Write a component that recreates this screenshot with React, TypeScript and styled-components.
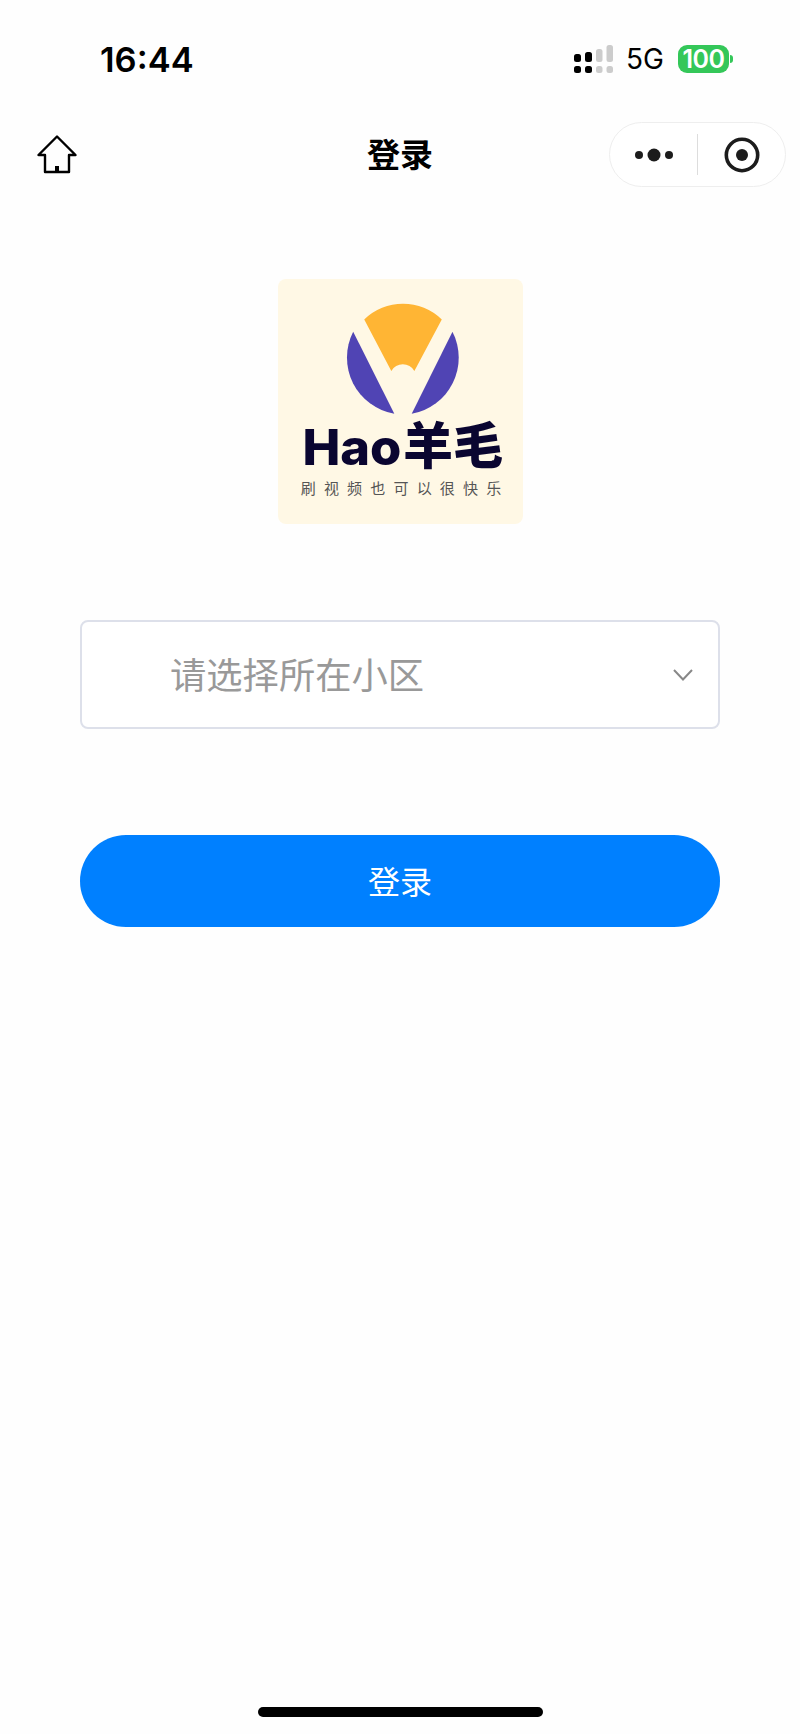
import React from "react";
import styled, { createGlobalStyle } from "styled-components";

const Global = createGlobalStyle`
  html, body { margin: 0; padding: 0; background: #fff; }
  * { box-sizing: border-box; }
`;

const cjk = `"Noto Sans CJK SC", "Noto Sans", sans-serif`;

const Page = styled.div`
  width: 800px;
  height: 1734px;
  display: flex;
  flex-direction: column;
  align-items: center;
  background: #fefefe;
  font-family: Inter, ${cjk};
  overflow: hidden;
`;

const StatusBar = styled.div`
  width: 100%;
  height: 118px;
  flex: none;
  display: flex;
  align-items: center;
  justify-content: space-between;
  padding: 0 67px 0 100px;
  color: #000;
`;

const Clock = styled.span`
  font-size: 34.5px;
  font-weight: 600;
  letter-spacing: 0;
`;

const StatusRight = styled.div`
  display: flex;
  align-items: center;
`;

const Network = styled.span`
  font-size: 28px;
  font-weight: 400;
  margin: 0 14px 0 13px;
  line-height: 1;
`;

const Battery = styled.div`
  display: flex;
  align-items: center;
`;

const BatteryBody = styled.span`
  width: 51px;
  height: 28px;
  border-radius: 9px;
  background: #34c759;
  color: #fff;
  font-size: 25px;
  font-weight: 600;
  display: flex;
  align-items: center;
  justify-content: center;
  letter-spacing: -0.5px;
`;

const BatteryTip = styled.span`
  width: 3px;
  height: 8px;
  margin-left: 1px;
  border-radius: 0 3px 3px 0;
  background: #34c759;
`;

const NavBar = styled.div`
  width: 100%;
  height: 73px;
  flex: none;
  display: grid;
  grid-template-columns: 1fr auto 1fr;
  align-items: center;
`;

const HomeButton = styled.div`
  padding-left: 37px;
  display: flex;
`;

const Title = styled.div`
  font-family: ${cjk};
  font-size: 33px;
  font-weight: 700;
  color: #000;
  line-height: 1;
  padding-bottom: 3px;
`;

const Capsule = styled.div`
  justify-self: end;
  width: 177px;
  height: 65px;
  margin-right: 14px;
  border: 1px solid #eeeeee;
  border-radius: 33px;
  display: flex;
  align-items: center;
  background: #fff;
`;

const CapsuleCell = styled.div`
  flex: 1;
  display: flex;
  align-items: center;
  justify-content: center;
`;

const CapsuleDivider = styled.span`
  width: 1px;
  height: 41px;
  background: #dddddd;
`;

const Logo = styled.svg`
  width: 245px;
  height: 245px;
  flex: none;
  margin-top: 88px;
  display: block;
`;

const Select = styled.div`
  width: 640px;
  height: 109px;
  flex: none;
  margin-top: 96px;
  border: 2px solid #dde0ea;
  border-radius: 8px;
  padding: 0 25px 0 88px;
  display: flex;
  align-items: center;
  justify-content: space-between;
  background: #fff;
`;

const Placeholder = styled.span`
  font-family: ${cjk};
  font-size: 36.3px;
  color: #999999;
  line-height: 1;
  padding-bottom: 3px;
`;

const LoginButton = styled.button`
  width: 640px;
  height: 92px;
  flex: none;
  margin-top: 106px;
  border: 0;
  padding: 0 0 2px;
  border-radius: 46px;
  background: #0080ff;
  color: #fff;
  font-family: ${cjk};
  font-size: 32px;
  font-weight: 400;
`;

const HomeIndicator = styled.div`
  width: 285px;
  height: 10px;
  flex: none;
  margin-top: auto;
  margin-bottom: 17px;
  border-radius: 5px;
  background: #000;
`;

const Signal = () => (
  <svg width="39" height="29" viewBox="0 0 39 29">
    <rect x="0" y="9" width="7" height="8" rx="2.5" fill="#000" />
    <rect x="11" y="7" width="7" height="10" rx="2.5" fill="#000" />
    <rect x="22" y="4" width="6.5" height="13" rx="2.5" fill="#ccc" />
    <rect x="32.5" y="0" width="6.5" height="17" rx="2.5" fill="#ccc" />
    <rect x="0" y="21" width="7" height="7" rx="2.5" fill="#000" />
    <rect x="11" y="21" width="7" height="7" rx="2.5" fill="#000" />
    <rect x="22" y="21" width="6.5" height="7" rx="2.5" fill="#ccc" />
    <rect x="32.5" y="21" width="6.5" height="7" rx="2.5" fill="#ccc" />
  </svg>
);

const HomeIcon = () => (
  <svg width="40" height="39" viewBox="0 0 40 39" fill="none">
    <path
      d="M20 1.5 L1.5 20 H8 V37 H32 V20 H38.5 Z"
      stroke="#000"
      strokeWidth="2.4"
      strokeLinejoin="round"
    />
    <rect x="18" y="31" width="4" height="6" fill="#000" />
  </svg>
);

const Dots = () => (
  <svg width="38" height="14" viewBox="0 0 38 14">
    <circle cx="4" cy="7" r="4" fill="#1c1c1c" />
    <circle cx="19" cy="7" r="6.5" fill="#1c1c1c" />
    <circle cx="34" cy="7" r="4" fill="#1c1c1c" />
  </svg>
);

const Target = () => (
  <svg width="36" height="36" viewBox="0 0 36 36">
    <circle cx="18" cy="18" r="15.7" fill="none" stroke="#1c1c1c" strokeWidth="3.6" />
    <circle cx="18" cy="18" r="6" fill="#1c1c1c" />
  </svg>
);

const Chevron = () => (
  <svg width="20" height="12" viewBox="0 0 20 12" fill="none">
    <path d="M1 1 L10 10.5 L19 1" stroke="#888" strokeWidth="2" />
  </svg>
);

export default function App() {
  return (
    <Page>
      <Global />
      <StatusBar>
        <Clock>16:44</Clock>
        <StatusRight>
          <Signal />
          <Network>5G</Network>
          <Battery>
            <BatteryBody>100</BatteryBody>
            <BatteryTip />
          </Battery>
        </StatusRight>
      </StatusBar>
      <NavBar>
        <HomeButton>
          <HomeIcon />
        </HomeButton>
        <Title>登录</Title>
        <Capsule>
          <CapsuleCell>
            <Dots />
          </CapsuleCell>
          <CapsuleDivider />
          <CapsuleCell>
            <Target />
          </CapsuleCell>
        </Capsule>
      </NavBar>
      <Logo viewBox="24 28 733 733">
        <rect x="24" y="28" width="733" height="733" rx="24" fill="#fff8e5" />
        <path
          d="M282 149 A166 166 0 0 1 514 149 L432 303 A40 40 0 0 0 363 303 Z"
          fill="#ffb534"
        />
        <path d="M249 186 A170 170 0 0 0 372 431 Z" fill="#5044b4" />
        <path d="M546 186 A170 170 0 0 1 424 431 Z" fill="#5044b4" />
        <text
          x="97"
          y="585"
          fontFamily="Inter, sans-serif"
          fontWeight="800"
          fontSize="146"
          fill="#0a0530"
          textLength="296"
          lengthAdjust="spacingAndGlyphs"
        >
          Hao
        </text>
        <text
          x="398"
          y="581"
          fontFamily={cjk}
          fontWeight="900"
          fontSize="150"
          fill="#0a0530"
        >
          羊毛
        </text>
        <text
          x="92"
          y="672"
          fontFamily={cjk}
          fontSize="45"
          fill="#555"
          textLength="600"
        >
          刷视频也可以很快乐
        </text>
      </Logo>
      <Select>
        <Placeholder>请选择所在小区</Placeholder>
        <Chevron />
      </Select>
      <LoginButton>登录</LoginButton>
      <HomeIndicator />
    </Page>
  );
}
